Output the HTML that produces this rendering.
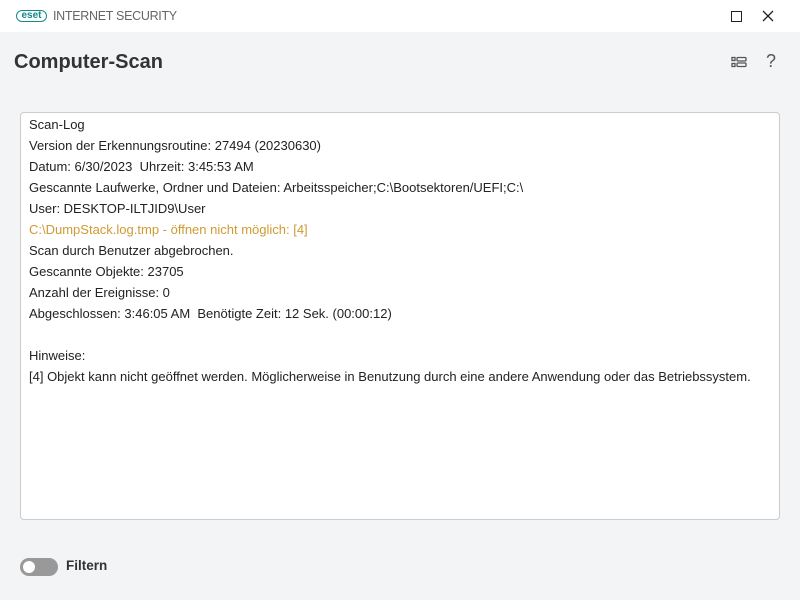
<!DOCTYPE html>
<html><head><style>
body{margin:0;width:800px;height:600px;background:#f3f4f6;font-family:"Liberation Sans",sans-serif;position:relative;overflow:hidden}
.tb{position:absolute;left:0;top:0;width:800px;height:32px;background:#fff}
.logo{position:absolute;left:16px;top:10px;width:31px;height:12px;border:1.5px solid #138a8a;border-radius:7px;box-sizing:border-box;color:#138a8a;font-size:10px;font-weight:bold;line-height:9px;text-align:center}
.pt{position:absolute;left:53px;top:9px;font-size:12.5px;color:#666;letter-spacing:-0.3px}
h1{position:absolute;left:14px;top:51px;margin:0;font-size:20px;font-weight:bold;color:#333}
.box{position:absolute;left:20px;top:112px;width:760px;height:408px;box-sizing:border-box;background:#fff;border:1px solid #ccc;border-radius:4px;padding:1px 8px;font-size:13px;color:#222;line-height:21px}
.o{color:#d09a33}
.tg{position:absolute;left:20px;top:558px;width:38px;height:18px;border-radius:9px;background:#999}
.tg:after{content:"";position:absolute;left:3px;top:3px;width:12px;height:12px;border-radius:50%;background:#fff}
.fl{position:absolute;left:66px;top:558px;font-size:13.5px;font-weight:bold;color:#333}
</style></head><body>
<div class="tb">
<div class="logo">eset</div>
<div class="pt">INTERNET SECURITY</div>
<div style="position:absolute;left:731px;top:11px;width:9px;height:9px;border:1.3px solid #222"></div>
<svg style="position:absolute;left:762px;top:10px" width="12" height="12"><path d="M1 1L11 11M11 1L1 11" stroke="#222" stroke-width="1.3"/></svg>
</div>
<h1>Computer-Scan</h1>
<svg style="position:absolute;left:731px;top:56px" width="16" height="13"><rect x="1" y="1.5" width="3" height="3" fill="none" stroke="#555" stroke-width="1.3"/><rect x="1" y="7.5" width="3" height="3" fill="none" stroke="#555" stroke-width="1.3"/><rect x="6" y="1.5" width="9" height="3.5" rx="1" fill="none" stroke="#555" stroke-width="1.3"/><rect x="6" y="7" width="9" height="3.5" rx="1" fill="none" stroke="#555" stroke-width="1.3"/></svg>
<div style="position:absolute;left:766px;top:51px;font-size:18px;color:#555">?</div>
<div class="box">
Scan-Log<br>Version der Erkennungsroutine: 27494 (20230630)<br>Datum: 6/30/2023&nbsp; Uhrzeit: 3:45:53 AM<br>Gescannte Laufwerke, Ordner und Dateien: Arbeitsspeicher;C:\Bootsektoren/UEFI;C:\<br>User: DESKTOP-ILTJID9\User<br><span class="o">C:\DumpStack.log.tmp - öffnen nicht möglich: [4]</span><br>Scan durch Benutzer abgebrochen.<br>Gescannte Objekte: 23705<br>Anzahl der Ereignisse: 0<br>Abgeschlossen: 3:46:05 AM&nbsp; Benötigte Zeit: 12 Sek. (00:00:12)<br><br>Hinweise:<br>[4] Objekt kann nicht geöffnet werden. Möglicherweise in Benutzung durch eine andere Anwendung oder das Betriebssystem.
</div>
<div class="tg"></div>
<div class="fl">Filtern</div>
</body></html>
